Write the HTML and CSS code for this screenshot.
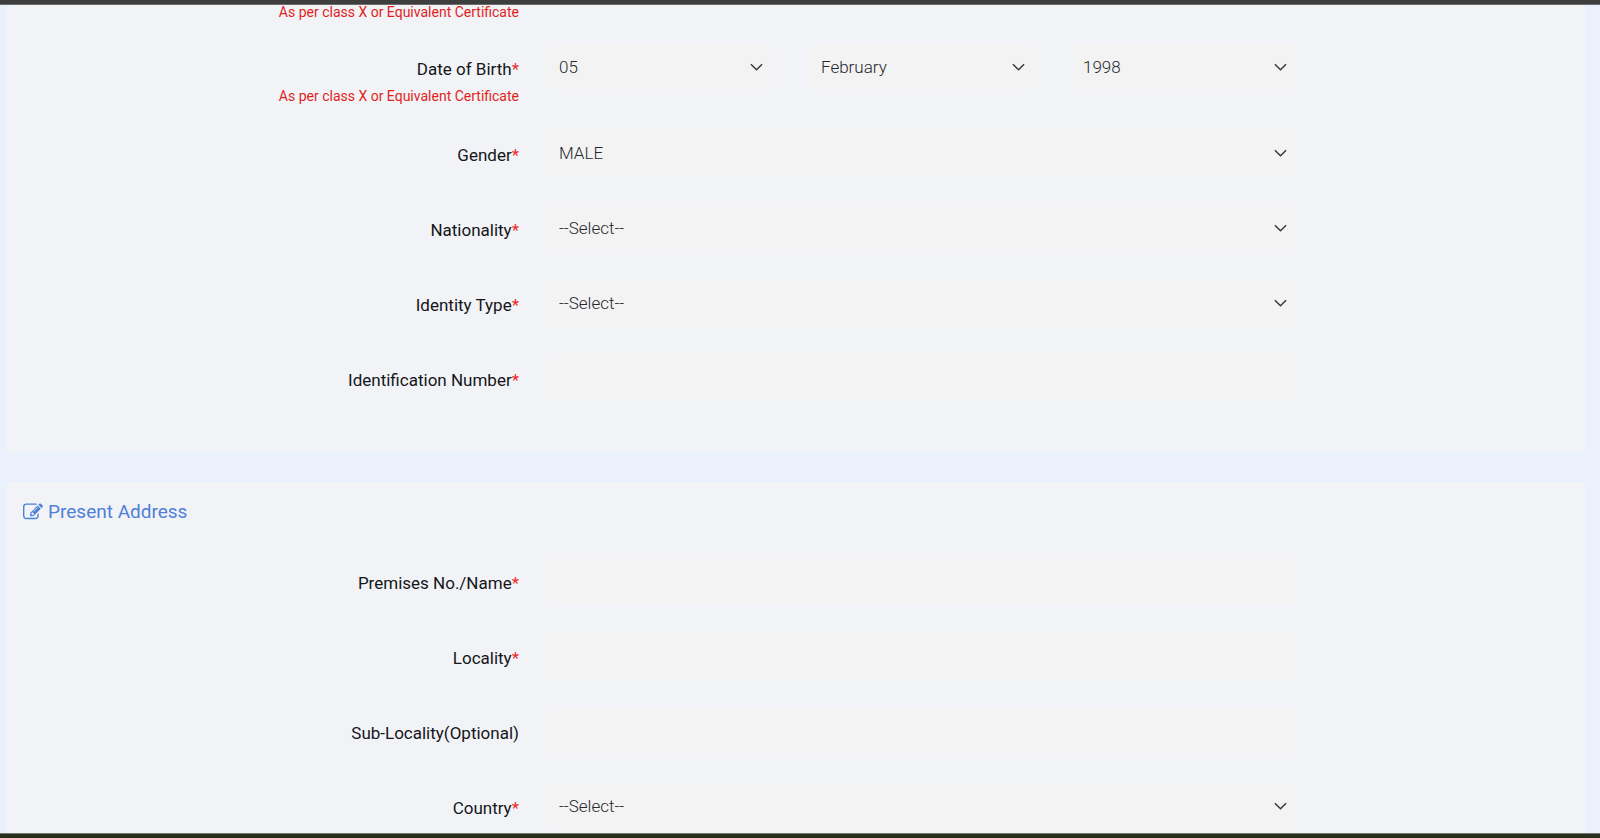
FILE: index.html
```
<!DOCTYPE html>
<html lang="en">
<head>
<meta charset="utf-8">
<title>Application Form</title>
<link rel="stylesheet" href="styles.css">
</head>
<body>
<div class="edge edge-top"></div>
<main class="page">
  <section class="card card-personal">
    <div class="row row-hinted">
      <div class="label-cell"><p class="hint hint-cut">As per class X or Equivalent Certificate</p></div>
    </div>
    <div class="row row-hinted">
      <div class="label-cell">
        <label class="label" for="day">Date of Birth<span class="req">*</span></label>
        <p class="hint">As per class X or Equivalent Certificate</p>
      </div>
      <div class="field-cell date">
        <select class="control select" id="day"><option>05</option></select>
        <select class="control select" aria-label="Month of birth"><option>February</option></select>
        <select class="control select" aria-label="Year of birth"><option>1998</option></select>
      </div>
    </div>
    <div class="row">
      <div class="label-cell"><label class="label" for="gender">Gender<span class="req">*</span></label></div>
      <div class="field-cell"><select class="control select" id="gender"><option>MALE</option></select></div>
    </div>
    <div class="row">
      <div class="label-cell"><label class="label" for="nationality">Nationality<span class="req">*</span></label></div>
      <div class="field-cell"><select class="control select" id="nationality"><option>--Select--</option></select></div>
    </div>
    <div class="row">
      <div class="label-cell"><label class="label" for="idtype">Identity Type<span class="req">*</span></label></div>
      <div class="field-cell"><select class="control select" id="idtype"><option>--Select--</option></select></div>
    </div>
    <div class="row">
      <div class="label-cell"><label class="label" for="idnum">Identification Number<span class="req">*</span></label></div>
      <div class="field-cell"><input class="control" type="text" id="idnum"></div>
    </div>
  </section>
  <section class="card card-address">
    <h2 class="title">
      <svg class="title-icon" viewBox="0 0 1792 1792" aria-hidden="true"><path fill="currentColor" d="M888 1184l116-116-152-152-116 116v56h96v96h56zm440-720q-16-16-33 1l-350 350q-17 17-1 33t33-1l350-350q17-17 1-33zm80 594v190q0 119-84.5 203.5t-203.5 84.5h-832q-119 0-203.5-84.5t-84.5-203.5v-832q0-119 84.5-203.5t203.5-84.5h832q63 0 117 25 15 7 18 23 3 17-9 29l-49 49q-14 14-32 8-23-6-45-6h-832q-66 0-113 47t-47 113v832q0 66 47 113t113 47h832q66 0 113-47t47-113v-126q0-13 9-22l64-64q15-15 35-7t20 29zm-96-738l288 288-672 672h-288v-288zm444 132l-92 92-288-288 92-92q28-28 68-28t68 28l152 152q28 28 28 68t-28 68z"/></svg>
      <span>Present Address</span>
    </h2>
    <div class="row">
      <div class="label-cell"><label class="label" for="premises">Premises No./Name<span class="req">*</span></label></div>
      <div class="field-cell"><input class="control" type="text" id="premises"></div>
    </div>
    <div class="row">
      <div class="label-cell"><label class="label" for="locality">Locality<span class="req">*</span></label></div>
      <div class="field-cell"><input class="control" type="text" id="locality"></div>
    </div>
    <div class="row">
      <div class="label-cell"><label class="label" for="sublocality">Sub-Locality(Optional)</label></div>
      <div class="field-cell"><input class="control" type="text" id="sublocality"></div>
    </div>
    <div class="row">
      <div class="label-cell"><label class="label" for="country">Country<span class="req">*</span></label></div>
      <div class="field-cell"><select class="control select" id="country"><option>--Select--</option></select></div>
    </div>
  </section>
</main>
<div class="edge edge-bottom"></div>
</body>
</html>
```
FILE: styles.css
```
* { box-sizing: border-box; }
body {
  margin: 0;
  height: 100vh;
  display: flex;
  flex-direction: column;
  overflow: hidden;
  background: #ebf0fd;
  color: #14161a;
  font-family: Roboto, "Liberation Sans", sans-serif;
  font-size: 17px;
}
.edge { flex: none; height: 5px; }
.edge-top { background: #3e3e3e; border-bottom: 1px solid #6c6c6c; }
.edge-bottom { background: #2a2e1c; border-top: 1px solid #777a70; }
.page {
  flex: 1;
  min-height: 0;
  overflow: hidden;
  display: flex;
  flex-direction: column;
  gap: 30px;
  padding: 0 15px 0 7px;
}
.card { flex: none; background: #f2f3f6; padding: 0 16px; }
.card-personal { padding-bottom: 22px; }
.card-address { padding-top: 18px; }
.row {
  display: grid;
  grid-template-columns: 496fr 778fr 272fr;
  margin-bottom: 29px;
}
.row-hinted { margin-bottom: 25px; }
.label-cell { text-align: right; }
.label { display: block; padding-top: 14px; line-height: 22px; }
.req { color: #ee2b2b; }
.hint { margin: 7px 0 0; font-size: 14px; line-height: 18px; color: #e01f22; }
.hint-cut { margin-top: 0; line-height: 14px; }
.field-cell { padding-left: 27px; }
.date { display: grid; grid-template-columns: repeat(3, 1fr); column-gap: 35px; align-items: start; }
.control {
  display: block;
  width: 100%;
  height: 46px;
  margin: 0;
  padding: 0 36px 0 13px;
  border: 0;
  border-radius: 4px;
  background-color: #f3f3f4;
  color: #26282c;
  font: 300 17px Roboto, "Liberation Sans", sans-serif;
}
.select {
  appearance: none;
  background-image: url("data:image/svg+xml,%3Csvg xmlns='http://www.w3.org/2000/svg' viewBox='0 0 14 8'%3E%3Cpath d='M1 1l6 6 6-6' fill='none' stroke='%23343a40' stroke-width='1.6'/%3E%3C/svg%3E");
  background-repeat: no-repeat;
  background-position: right 10px center;
  background-size: 13px 8px;
}
.title {
  display: flex;
  align-items: center;
  gap: 5px;
  margin: 0 0 34px;
  font-size: 19px;
  font-weight: 400;
  line-height: 24px;
  color: #4d80d8;
}
.title-icon { width: 20px; height: 20px; }
```
